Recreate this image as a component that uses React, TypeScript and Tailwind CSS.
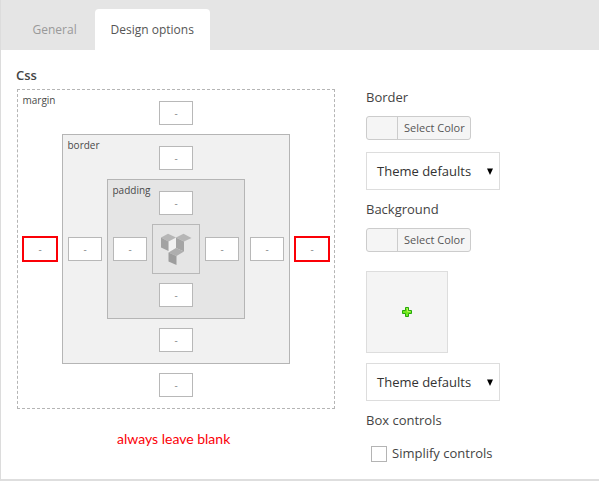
import type { ReactNode } from 'react';

const FONT = 'font-["Open_Sans","Noto_Sans",sans-serif]';

function Side({ className = '', red = false }: { className?: string; red?: boolean }) {
  return (
    <div
      className={`flex shrink-0 items-center justify-center bg-white text-[10px] leading-none text-[#8a8a8a] ${
        red ? 'h-[26px] w-9 border-2 border-[#fb0007]' : 'h-6 w-[34px] border border-[#b8b8b8]'
      } ${className}`}
    >
      -
    </div>
  );
}

function Layer({ label, className, red, children }: { label: string; className: string; red?: boolean; children: ReactNode }) {
  return (
    <div className={`grid grid-cols-[44px_1fr_44px] grid-rows-[44px_1fr_44px] border-[#b5b5b5] ${className}`}>
      <div className="pt-[3px] pl-[4.5px] text-[10px] leading-[14px] whitespace-nowrap text-[#4a4a4a]">{label}</div>
      <div className="flex items-start justify-center pt-[11px]"><Side /></div>
      <div />
      <div className="flex items-center justify-center"><Side red={red} /></div>
      {children}
      <div className="flex items-center justify-center"><Side red={red} /></div>
      <div />
      <div className="flex items-start justify-center pt-[9px]"><Side /></div>
      <div />
    </div>
  );
}

function Logo() {
  return (
    <svg width="32" height="32" viewBox="0 0 32 32">
      <path d="M8.500 8.500 16 4.500V15L8.500 19.500Z" fill="#f0f0f0" />
      <path d="M1 4.500 8 .8 16 4.500 8.500 8.500Z" fill="#b6b6b6" />
      <path d="M1 4.500 8.500 8.500V18L1 14.500Z" fill="#a2a2a2" />
      <path d="M16 4.500 23.500 .8 31.500 5 24 8.500Z" fill="#b6b6b6" />
      <path d="M16 4.500 24 8.500V18.500L16 15Z" fill="#a4a4a4" />
      <path d="M8.500 19.500 16 15 24 18.500 16.500 23Z" fill="#aeaeae" />
      <path d="M8.500 19.500 16.500 23V32L8.500 28.500Z" fill="#9d9d9d" />
    </svg>
  );
}

function ColorButton() {
  return (
    <div className="flex h-6 w-[105px] overflow-hidden rounded-[3px] border border-[#ccc] bg-[#f5f5f5] text-[11px] leading-[22px] text-[#555]">
      <div className="w-[31px] border-r border-[#ccc]" />
      <div className="flex-1 pl-[6px] whitespace-nowrap">Select Color</div>
    </div>
  );
}

function Select() {
  return (
    <div className="flex h-[38px] w-[134px] items-center justify-between border border-[#ddd] bg-white pr-[6px] pl-[10px] text-[13px] text-[#333]">
      <span className="pt-px whitespace-nowrap">Theme defaults</span>
      <svg width="6" height="7" viewBox="0 0 6 7"><path d="M0 0.500H6L3 7Z" fill="#000" /></svg>
    </div>
  );
}

function Heading({ children }: { children: ReactNode }) {
  return <div className="h-6 text-[13px] leading-6 text-[#444]">{children}</div>;
}

export default function App() {
  return (
    <div className={`flex h-[481px] w-[599px] flex-col overflow-hidden border-b-2 border-l border-b-[#dedede] border-l-[#dcdcdc] bg-white ${FONT}`}>
      <div className="flex h-[50px] shrink-0 items-end bg-[#e5e5e5] text-xs">
        <div className="h-[41px] w-[94px] pl-[31.5px] leading-[42px] text-[#999]">General</div>
        <div className="h-[41px] w-[115px] rounded-t-[4px] bg-white pl-[15.5px] leading-[42px] whitespace-nowrap text-[#555]">Design options</div>
      </div>
      <div className="flex flex-1">
        <div className="w-[349px] pl-4">
          <div className="-ml-px mt-[13px] h-[24px] text-[13px] leading-[24px] font-semibold text-[#444]">Css</div>
          <div className="mt-[2px] h-[320px] w-[318px]">
            <Layer label="margin" red className="h-[320px] w-[318px] border border-dashed bg-white">
              <Layer label="border" className="border bg-[#f1f1f1]">
                <Layer label="padding" className="border bg-[#e5e5e5]">
                  <div className="flex items-center justify-center border border-[#b8b8b8]"><Logo /></div>
                </Layer>
              </Layer>
            </Layer>
          </div>
          <div className='mt-[20px] pl-[100px] font-["Lato",sans-serif] text-[14px] leading-5 whitespace-nowrap text-[#fb0007]'>always leave blank</div>
        </div>
        <div className="flex flex-col items-start pl-4 pt-[35px]">
          <Heading>Border</Heading>
          <div className="mt-[7px]"><ColorButton /></div>
          <div className="mt-3"><Select /></div>
          <div className="mt-[7px]"><Heading>Background</Heading></div>
          <div className="mt-[7px]"><ColorButton /></div>
          <div className="mt-[19px] flex h-[82px] w-[82px] items-center justify-center border border-[#ddd] bg-[#f4f4f4]">
            <svg width="10" height="10" viewBox="0 0 10 10">
              <path d="M3.500 .5h3v3h3v3h-3v3h-3v-3h-3v-3h3Z" fill="#72e91c" stroke="#26a90b" />
              <path d="M4.500 1.500h1v3h3" fill="none" stroke="#b4f35b" />
            </svg>
          </div>
          <div className="mt-[10px]"><Select /></div>
          <div className="mt-[7px]"><Heading>Box controls</Heading></div>
          <div className="mt-[10px] flex h-6 items-center pl-[5px] text-[13px] text-[#444]">
            <div className="h-4 w-4 border border-[#b4b4b4] bg-white" />
            <span className="pl-[5px]">Simplify controls</span>
          </div>
        </div>
      </div>
    </div>
  );
}
